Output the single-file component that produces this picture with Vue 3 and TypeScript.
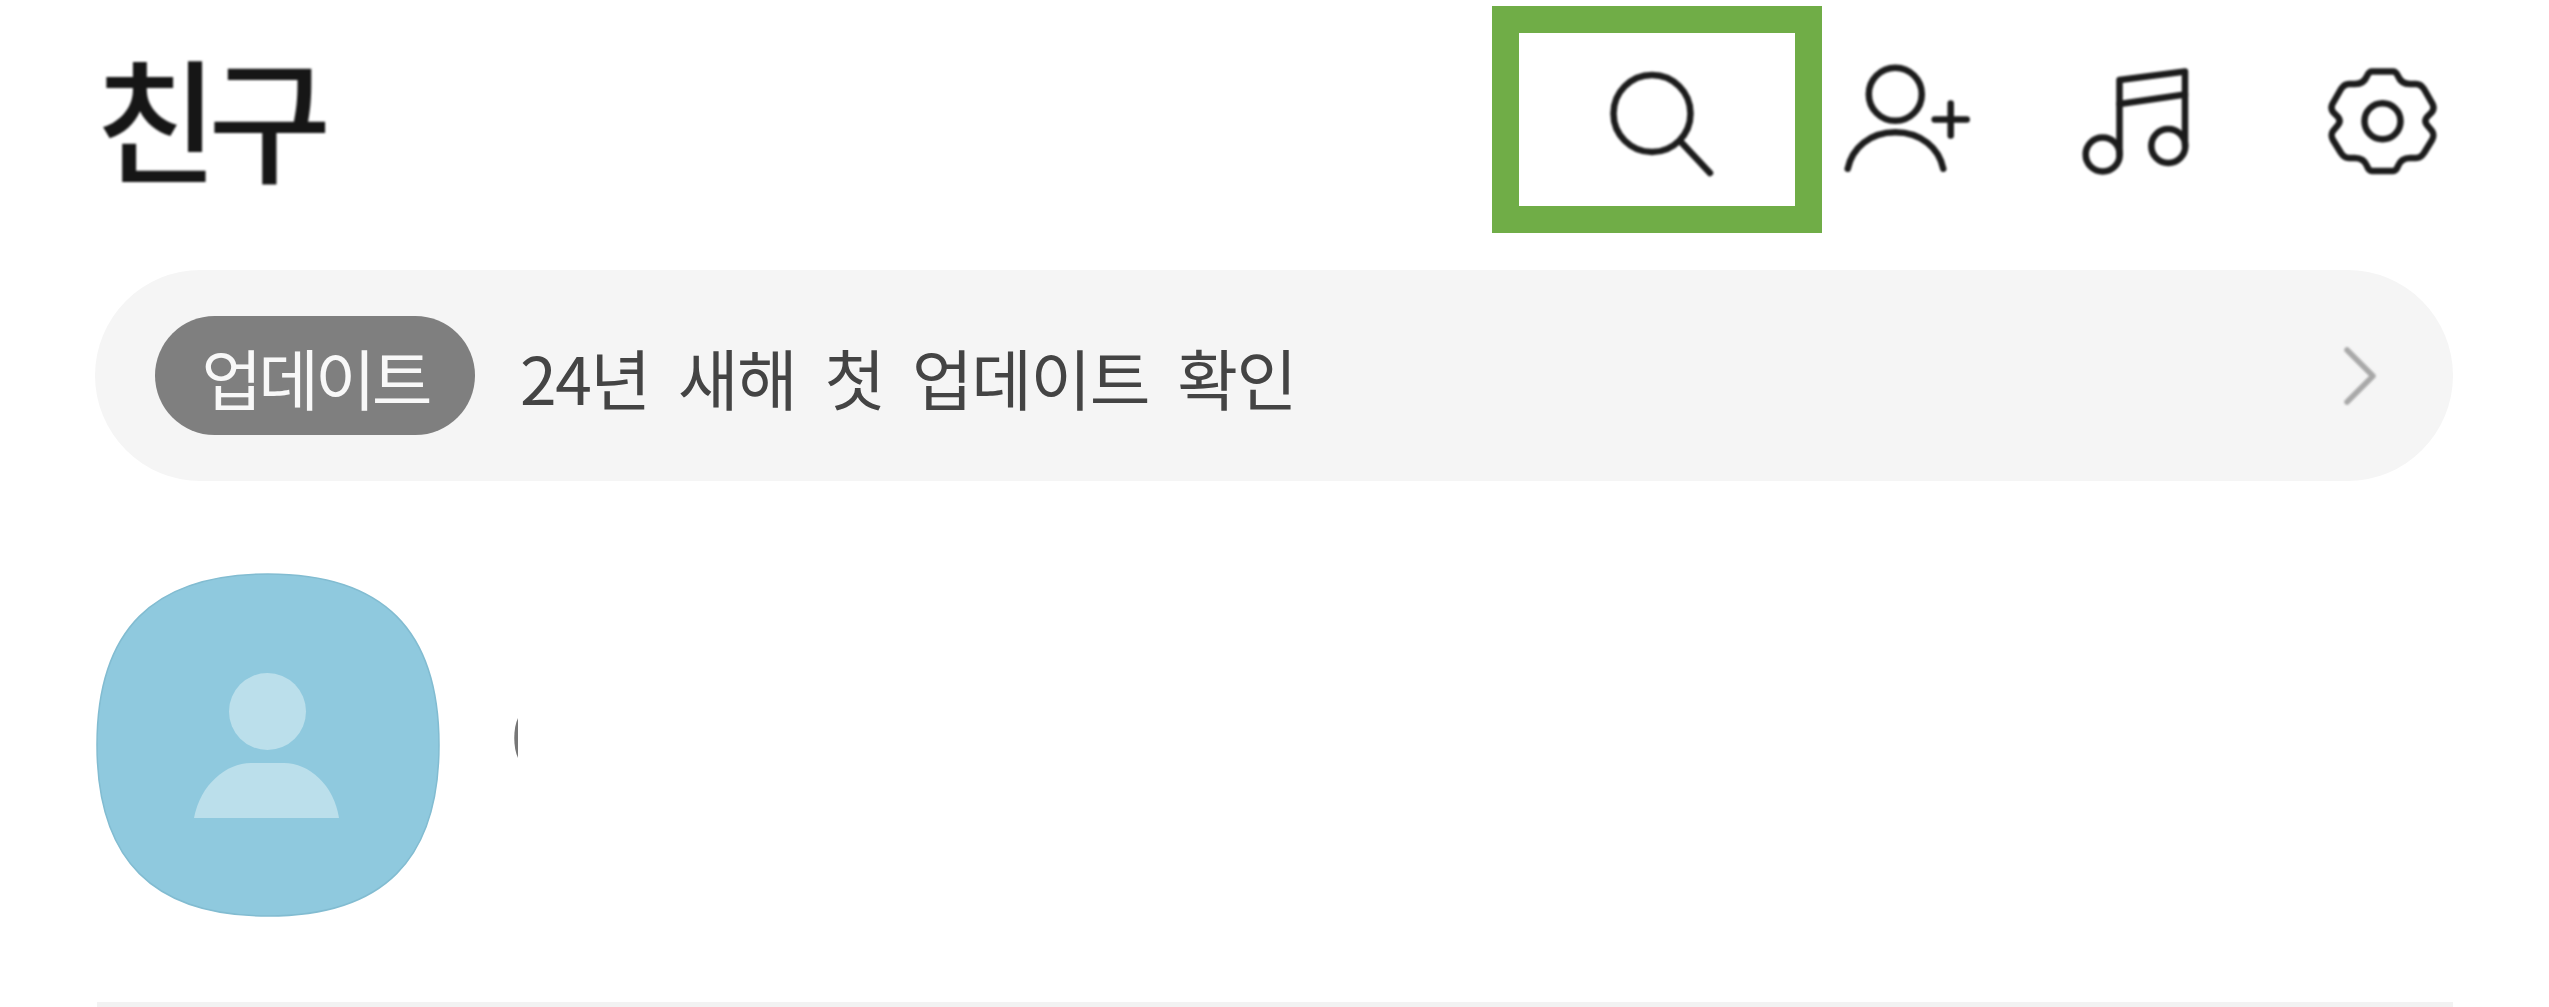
<script setup lang="ts">
const title = '친구'
const badge = '업데이트'
const notice = '24년 새해 첫 업데이트 확인'
</script>

<template>
  <div class="screen">
    <header class="top">
      <h1 class="title">{{ title }}</h1>
      <div class="actions">
        <button class="icon-btn search" type="button" aria-label="검색">
          <svg viewBox="0 0 140 140" class="icon">
            <circle cx="65" cy="63.5" r="38.5" />
            <path d="M94 92L123 123" />
          </svg>
        </button>
        <button class="icon-btn add" type="button" aria-label="친구 추가">
          <svg viewBox="0 0 140 140" class="icon">
            <circle cx="57.3" cy="44.2" r="26.5" />
            <path d="M9.7 118.8C14 98 32 82.2 57.3 82.2C83 82.2 101 98 105.3 118.8" />
            <path d="M96.7 69.5H128.7M112.7 53.5V85.5" />
          </svg>
        </button>
        <button class="icon-btn music" type="button" aria-label="음악">
          <svg viewBox="0 0 140 140" class="icon">
            <circle cx="36.7" cy="104.5" r="17" />
            <circle cx="102.3" cy="96" r="17" />
            <path d="M53.5 104.5V30L119 21.5V96" />
            <path d="M53.5 54L119 44.5" />
          </svg>
        </button>
        <button class="icon-btn settings" type="button" aria-label="설정">
          <svg viewBox="0 0 140 140" class="icon">
            <path
              d="M60 21.5H81C84 21.5 85 24 86 26C88 31 92 34 98 34L104 34C108 34 110 36 112 39L120 53C122 56 122 59 120 62L115 67C113 69.5 113 72.5 115 75L120 81C122 84 122 86 120 90L112 103C110 106 108 108 104 108L98 108C92 108 88 111 86 116C85 119 84 121 81 121H60C57 121 56 119 55 116C53 111 49 108 43 108L37 108C33 108 31 106 29 103L21 90C19 86 19 84 21 81L26 75C28 72.5 28 69.5 26 67L21 62C19 59 19 56 21 53L29 39C31 36 33 34 37 34L43 34C49 34 53 31 55 26C56 24 57 21.5 60 21.5Z"
            />
            <circle cx="70.5" cy="71.2" r="18" />
          </svg>
        </button>
      </div>
    </header>

    <section class="notice">
      <span class="pill">{{ badge }}</span>
      <span class="notice-text">{{ notice }}</span>
      <svg class="chevron" viewBox="0 0 34 58">
        <path d="M3 3L29 29L3 55" />
      </svg>
    </section>

    <section class="profile">
      <svg class="avatar" viewBox="0 0 344 344">
        <path
          class="squircle"
          d="M172 1C287 1 343 57 343 172C343 287 287 343 172 343C57 343 1 287 1 172C1 57 57 1 172 1Z"
        />
        <circle class="figure" cx="171.5" cy="138.5" r="38.5" />
        <path class="figure" d="M98 245C104 212 130 190 155 190H188C213 190 238 212 243 245Z" />
      </svg>
      <svg class="name-edge" viewBox="0 0 5 40">
        <path d="M5 0C0 10 0 30 5 40Z" />
      </svg>
    </section>

    <div class="divider"></div>
  </div>
</template>

<style scoped>
.screen {
  width: 2549px;
  height: 1007px;
  overflow: hidden;
  background: #fff;
  font-family: "Noto Sans CJK KR", "Noto Sans", sans-serif;
}

.top {
  display: flex;
  align-items: center;
  height: 227px;
  padding: 6px 63px 0 95px;
}

.title {
  margin: 0 0 10px;
  font-size: 134px;
  font-weight: 500;
  letter-spacing: -10px;
  line-height: 1;
  color: #161616;
  filter: blur(0.8px);
}

.actions {
  display: flex;
  align-self: stretch;
  margin-left: auto;
}

.icon-btn {
  display: flex;
  align-items: center;
  justify-content: center;
  padding: 0;
  border: 0;
  background: none;
}

.search {
  width: 330px;
  border: 27px solid #70ad47;
}

.add {
  width: 172px;
}

.music {
  width: 284px;
}

.settings {
  width: 208px;
}

.icon {
  flex: none;
  width: 140px;
  height: 140px;
  fill: none;
  stroke: #1c1c1c;
  stroke-width: 6.5;
  stroke-linecap: round;
  stroke-linejoin: round;
  filter: blur(0.8px);
}

.notice {
  display: flex;
  align-items: center;
  height: 211px;
  margin: 37px 96px 0 95px;
  padding: 0 75px 0 60px;
  border-radius: 106px;
  background: #f5f5f5;
}

.pill {
  display: flex;
  align-items: center;
  justify-content: center;
  width: 320px;
  height: 119px;
  border-radius: 60px;
  background: #7f7f7f;
  color: #f8f8f8;
  font-size: 66px;
  font-weight: 400;
  letter-spacing: -4px;
  line-height: 1;
}

.notice-text {
  margin-left: 45px;
  color: #444;
  font-size: 66px;
  font-weight: 400;
  letter-spacing: -1.5px;
  word-spacing: 15px;
  line-height: 1;
  filter: blur(0.6px);
}

.chevron {
  width: 34px;
  height: 58px;
  margin-left: auto;
  fill: none;
  stroke: #a8a8a8;
  stroke-width: 5.5;
  stroke-linecap: round;
  stroke-linejoin: round;
  filter: blur(0.8px);
}

.profile {
  display: flex;
  align-items: center;
  margin: 92px 96px 0;
}

.avatar {
  width: 344px;
  height: 344px;
}

.squircle {
  fill: #8fc9de;
  stroke: #82bcd1;
  stroke-width: 1.5;
}

.figure {
  fill: #bbdfeb;
}

.name-edge {
  width: 5px;
  height: 40px;
  margin: 0 0 14px 73px;
  fill: #777;
}

.divider {
  height: 7px;
  margin: 85px 96px 0 97px;
  background: #f2f2f2;
}
</style>
